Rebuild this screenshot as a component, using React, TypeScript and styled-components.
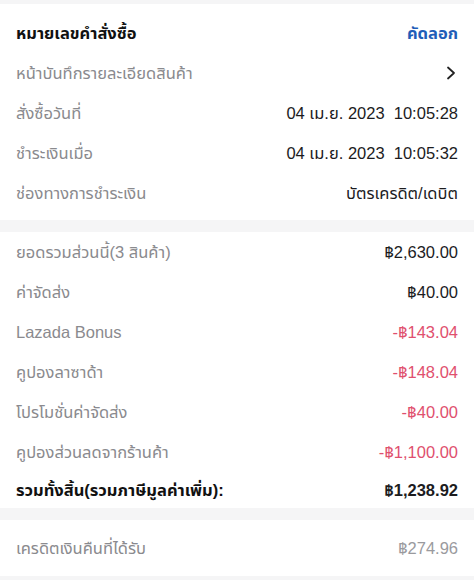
import React from "react";
import styled, { createGlobalStyle } from "styled-components";

const Global = createGlobalStyle`
  html, body { margin: 0; padding: 0; background: #ffffff; }
  body {
    font-family: "Liberation Sans", "Noto Sans Thai", "Noto Sans", sans-serif;
    -webkit-font-smoothing: antialiased;
  }
`;

const Page = styled.div`
  width: 474px;
  height: 580px;
  overflow: hidden;
  display: flex;
  flex-direction: column;
  background: #ffffff;
`;

const Band = styled.div<{ $h: number }>`
  height: ${(p) => p.$h}px;
  background: #f5f5f6;
  flex-shrink: 0;
`;

const Section = styled.div<{ $pt?: number; $pb?: number }>`
  display: flex;
  flex-direction: column;
  padding: ${(p) => p.$pt ?? 0}px 16px ${(p) => p.$pb ?? 0}px 16px;
`;

const Row = styled.div<{ $h?: number }>`
  height: ${(p) => p.$h ?? 40}px;
  display: flex;
  align-items: center;
  justify-content: space-between;
  font-size: 16.5px;
`;

const Label = styled.span<{ $strong?: boolean }>`
  color: ${(p) => (p.$strong ? "#111111" : "#8a8a8e")};
  font-weight: ${(p) => (p.$strong ? 700 : 400)};
`;

const Value = styled.span<{ $tone?: "dark" | "red" | "muted" | "blue"; $strong?: boolean }>`
  color: ${(p) =>
    p.$tone === "red"
      ? "#e0506e"
      : p.$tone === "muted"
      ? "#9a9a9e"
      : p.$tone === "blue"
      ? "#1f5db8"
      : "#1c1c1e"};
  font-weight: ${(p) => (p.$strong ? 700 : 400)};
  font-size: 16.5px;
`;

const Chevron = styled.svg`
  width: 10px;
  height: 14px;
  margin-right: 2px;
`;

export default function App() {
  const charges: { label: string; value: string; tone: "dark" | "red" }[] = [
    { label: "ยอดรวมส่วนนี้(3 สินค้า)", value: "฿2,630.00", tone: "dark" },
    { label: "ค่าจัดส่ง", value: "฿40.00", tone: "dark" },
    { label: "Lazada Bonus", value: "-฿143.04", tone: "red" },
    { label: "คูปองลาซาด้า", value: "-฿148.04", tone: "red" },
    { label: "โปรโมชั่นค่าจัดส่ง", value: "-฿40.00", tone: "red" },
    { label: "คูปองส่วนลดจากร้านค้า", value: "-฿1,100.00", tone: "red" },
  ];
  return (
    <Page>
      <Global />
      <Band $h={4} />
      <Section $pt={9} $pb={7}>
        <Row>
          <Label $strong>หมายเลขคำสั่งซื้อ</Label>
          <Value $tone="blue" $strong>คัดลอก</Value>
        </Row>
        <Row>
          <Label>หน้าบันทึกรายละเอียดสินค้า</Label>
          <Chevron viewBox="0 0 10 14">
            <path d="M2 1.5 L8 7 L2 12.5" fill="none" stroke="#222" strokeWidth="1.8" strokeLinecap="round" strokeLinejoin="round" />
          </Chevron>
        </Row>
        <Row>
          <Label>สั่งซื้อวันที่</Label>
          <Value>04 เม.ย. 2023&nbsp; 10:05:28</Value>
        </Row>
        <Row>
          <Label>ชำระเงินเมื่อ</Label>
          <Value>04 เม.ย. 2023&nbsp; 10:05:32</Value>
        </Row>
        <Row>
          <Label>ช่องทางการชำระเงิน</Label>
          <Value>บัตรเครดิต/เดบิต</Value>
        </Row>
      </Section>
      <Band $h={12} />
      <Section>
        {charges.map((c) => (
          <Row key={c.label}>
            <Label>{c.label}</Label>
            <Value $tone={c.tone}>{c.value}</Value>
          </Row>
        ))}
        <Row $h={36}>
          <Label $strong>รวมทั้งสิ้น(รวมภาษีมูลค่าเพิ่ม):</Label>
          <Value $strong>฿1,238.92</Value>
        </Row>
      </Section>
      <Band $h={12} />
      <Section>
        <Row $h={56}>
          <Label>เครดิตเงินคืนที่ได้รับ</Label>
          <Value $tone="muted">฿274.96</Value>
        </Row>
      </Section>
      <Band $h={8} />
    </Page>
  );
}
